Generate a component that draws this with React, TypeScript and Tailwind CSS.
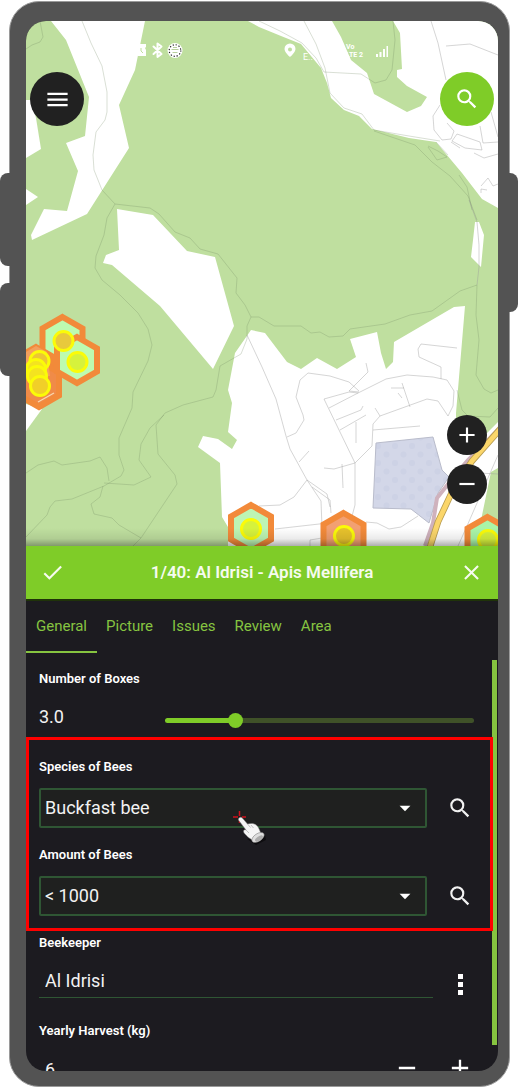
import { useState } from "react";
import type { ReactNode } from "react";
import { MdAdd, MdArrowDropDown, MdCheck, MdClose, MdMenu, MdRemove, MdSearch } from "react-icons/md";

const hexPoints = (x: number, y: number) =>
  [
    [x, y - 23],
    [x + 20, y - 11.5],
    [x + 20, y + 11.5],
    [x, y + 23],
    [x - 20, y + 11.5],
    [x - 20, y - 11.5],
  ]
    .map((p) => p.join(","))
    .join(" ");

function Hive({ x, y, fill }: { x: number; y: number; fill: string }) {
  return <polygon points={hexPoints(x, y)} fill={fill} stroke="#f28a3a" strokeWidth="6" />;
}

function Ring({ x, y, fill = "#d6f23c" }: { x: number; y: number; fill?: string }) {
  return <circle cx={x} cy={y} r="9.5" fill={fill} stroke="#fbfb08" strokeWidth="3" />;
}

function MapView() {
  return (
    <svg
      aria-label="Map"
      viewBox="26 21 472 525"
      preserveAspectRatio="xMidYMid slice"
      className="block h-full w-full bg-[#bfdf9f]"
    >
      <defs>
        <linearGradient id="shade" x1="0" y1="0" x2="0" y2="1">
          <stop offset="0" stopColor="#000" stopOpacity="0" />
          <stop offset="0.6" stopColor="#000" stopOpacity="0.08" />
          <stop offset="1" stopColor="#000" stopOpacity="0.32" />
        </linearGradient>
        <pattern id="dots" width="17" height="17" patternUnits="userSpaceOnUse">
          <rect width="17" height="17" fill="#d3d7e8" />
          <circle cx="4" cy="4" r="3" fill="#cdd2e5" />
          <circle cx="12.5" cy="12.5" r="3" fill="#cdd2e5" />
        </pattern>
      </defs>

      <g fill="#fff">
        <path d="M51 21 66 40 89 97 85 136 66 143 78 171 67 211 44 209 31 235 32 240 87 214 129 148 119 105 135 70 145 21Z" />
        <path d="M26 100h5l5 18 5 31-15 9Z" />
        <path d="M26 189l12 8-12 8Z" />
        <path d="M117 209 153 215 187 251 215 257 234 326 213 369 160 306 112 265 103 263 106 255 119 250Z" />
        <path d="M248 21 259 27 281 36 301 44 321 68 327 83 331 98 344 110 359 116 372 129 409 138 436 142 462 173 482 199 498 208V21Z" />
        <path d="M475 222h4l5 13-3 32-10-10 2-17Z" />
        <path d="M251 330 265 333 287 362 301 369 317 358 337 369 356 357 350 339 377 332 381 353 386 369 393 362 394 342 454 307 465 306 456 413V440L487 433 498 422V468L491 472 480 525 478 546H228V527L222 517 220 463 198 447 203 436 218 439 232 449 237 440 228 432 232 403 228 390 235 353Z" />
        <path d="M26 404 42 409 26 431Z" />
      </g>
      <path
        d="M332 21 341 37 351 60 367 73 374 94 407 112 421 106 427 97 407 86 397 77V70L402 69 400 33 393 21Z"
        fill="#bfdf9f"
      />

      <path
        d="M376 443 433 437 442 470 449 477 438 493 429 523 411 509 373 508Z"
        fill="url(#dots)"
        stroke="#b9bccb"
        strokeWidth="1"
      />

      <g fill="none" stroke="#6f8560" strokeOpacity="0.38" strokeWidth="0.7">
        <path d="M40 21 43 37 40 42 32 45 26 49" />
        <path d="M82 21 91 43 102 66 107 92V112L105 120 96 132 93 155 94 170 102 190 115 204 150 208 159 214 175 232 190 238 200 249 218 254 237 278 236 293 245 305 251 317 259 317 274 326 301 326 311 333 320 332 329 337 343 336 350 329 385 324 410 315 432 311 460 291 477 285" />
        <path d="M115 204 107 218 104 235 96 256 95 268 102 280 120 295 138 313 148 329 152 345 148 361 133 392 132 408 119 438 119 455 124 470 121 476 104 486 72 499 55 501 50 507 47 515 26 537" />
        <path d="M251 317 247 326V339L241 354 220 366 216 390 213 397 183 405 165 413 156 425 158 454 175 475 177 484 141 538 133 546" />
        <path d="M164 415 150 428 141 444 139 460 151 477 134 485 104 483" />
        <path d="M26 473 38 465 54 461 62 465 90 461 100 457 107 468 109 481" />
        <path d="M103 486 100 497 91 504 94 514 112 518 119 525 141 538" />
        <path d="M259 21 280 31 302 43 316 58 324 72 361 74 375 83 386 80 392 70 395 40 393 21" />
        <path d="M304 21 316 44 325 68 330 93 344 108 362 114 374 130 409 136 440 141" />
        <path d="M374 131 415 145 432 162 450 176 468 196 477 220" />
        <path d="M477 285 476 315 479 340 476 375 484 389 491 393 498 390" />
        <path d="M428 147 437 160 447 157 438 151 428 146M436 142 448 155M459 175 467 187 472 210" />
        <path d="M457 390 462 410 468 416 490 417 498 408" />
      </g>

      <g fill="none" stroke="#9b9b9b" strokeOpacity="0.6" strokeWidth="0.7">
        <path d="M431 21 438 43 446 80M446 46 470 44 498 55M440 105 433 116 434 130 442 140 451 139 454 131 447 123" />
        <path d="M480 126 483 143 498 142M491 112 498 137M457 134 480 142 482 150 465 148 452 141ZM451 142 460 148M474 153 484 158 498 154M481 193V189L487 190M481 186 488 178 493 186 498 184" />
        <path d="M469 200 477 222 479 245 479 267 477 285M247 335 262 367 276 399 286 436 290 449 307 480 321 501 322 527M259 506 280 505 294 497 307 480 327 494 330 507" />
        <path d="M359 391 349 382 330 376 308 373 300 380 296 397 303 415 304 420 296 433 287 437M366 363 368 372 349 391 359 392M324 399 349 392 358 393 386 379 407 375 433 377 447 380 454 391 453 406 448 416 438 401 427 399 380 416 373 424 372 446 355 463V505L351 520M324 399 355 463M329 408 358 393M336 420 361 410 363 406M340 430 366 415M324 468 334 469 355 463M342 464 343 488M356 422V443M441 379V367L419 357 418 349 421 344 457 348M402 383 410 407M391 388H404M398 393 402 398M373 430 420 426M375 408 380 416M299 462 309 451" />
        <path d="M275 529 328 523M366 522 377 523 389 529 401 527 418 516M458 546 467 526 498 455M478 473 498 474M310 546V540L322 538M312 487 330 500 331 513" />
      </g>

      <path d="M498 430 468 460 456 474 437 498 433 523 425 546" fill="none" stroke="#cfb2bd" strokeWidth="4" />
      <path d="M502 427 472 461 452 492 438 522 429 550" fill="none" stroke="#b99d51" strokeWidth="6.5" />
      <path d="M502 427 472 461 452 492 438 522 429 550" fill="none" stroke="#fbd66a" strokeWidth="4.8" />

      <Hive x={62.5} y={340} fill="#bdfbb0" />
      <Hive x={36} y={370} fill="#f28a3a" />
      <Hive x={39} y={384} fill="#f08b48" />
      <Hive x={77} y={360} fill="#bdfbb0" />
      <path d="M26 352 36 346 47 352 50 376 26 376Z" fill="#f3a05d" />
      <path d="M38 402 54 393" stroke="#f7d9b0" strokeWidth="1.2" />
      <Ring x={63.5} y={341} fill="#e8c93c" />
      <Ring x={77.5} y={362} />
      <Ring x={39.5} y={361} fill="#edc634" />
      <Ring x={36} y={369} fill="#f4e320" />
      <Ring x={37} y={376} fill="#f4e320" />
      <Ring x={40} y={386} fill="#f1cf28" />
      <Hive x={251} y={528} fill="#bdf5b4" />
      <Ring x={251} y={529} />
      <Hive x={343.5} y={536} fill="#f2a072" />
      <Ring x={344} y={536} fill="#e7c22c" />
      <Hive x={487.5} y={540} fill="#a9f5a8" />
      <Ring x={488} y={540} />

      <rect x="26" y="528" width="472" height="18" fill="url(#shade)" />

      <path
        d="M153.500 46.500 161.500 54 157.500 57V43.500L161.500 46.500 153.500 54"
        fill="none"
        stroke="#fff"
        strokeWidth="2"
        strokeLinecap="round"
        strokeLinejoin="round"
      />
      <path d="M138 44h8v3l-1 1 1 2v6h-8Z" fill="#fff" />
      <path d="M141 48v3l2 2" fill="none" stroke="#bfdf9f" strokeWidth="1" />
      <circle cx="175" cy="50.500" r="7.500" fill="#fff" />
      <circle cx="175" cy="50.500" r="5.800" fill="none" stroke="#222" strokeWidth="1.200" strokeDasharray="1.200 1.830" />
      <path d="M171.500 49.500h7M172.500 52.500h5M173 47.500h4" stroke="#b8cf9d" strokeWidth="1" />
      <path
        fillRule="evenodd"
        d="M290 43.500a5.500 5.500 0 0 0-5.500 5.500c0 3.500 5.500 8 5.500 8s5.500-4.500 5.500-8a5.500 5.500 0 0 0-5.500-5.500Zm0 4a2 2 0 1 1 0 4 2 2 0 0 1 0-4Z"
        fill="#fff"
      />
      <g fill="#fff" fontFamily="Roboto, sans-serif">
        <text x="303" y="60" fontSize="9">E..</text>
        <text x="346" y="49" fontSize="7" fontWeight="700">Vo</text>
        <text x="346" y="57" fontSize="7" fontWeight="700">LTE 2</text>
      </g>
      <path d="M376 54h2v3h-2ZM379.500 52h2v5h-2ZM383 49h2v8h-2ZM386.500 46h1.500v11h-1.500Z" fill="#fff" />
    </svg>
  );
}

function Field({ id, label, children }: { id: string; label: string; children: ReactNode }) {
  return (
    <div className="h-[88px] shrink-0">
      <label htmlFor={id} className="block text-[13px] leading-5 font-semibold text-white">
        {label}
      </label>
      <div className="mt-[11px] flex h-10 items-center">{children}</div>
    </div>
  );
}

function SelectRow({ id, options, pointer }: { id: string; options: string[]; pointer?: boolean }) {
  return (
    <>
      <div className="relative min-w-0 flex-1">
        <select
          id={id}
          className="block h-10 w-full appearance-none rounded-xs border-2 border-[#2f5634] bg-[#1f201f] pl-1 text-lg text-[#f2f2f2] outline-none"
        >
          {options.map((option) => (
            <option key={option}>{option}</option>
          ))}
        </select>
        <MdArrowDropDown size={26} className="pointer-events-none absolute top-[7px] right-[9px] text-white" />
        {pointer && <PointerHand />}
      </div>
      <button type="button" aria-label="Search" className="ml-[19px] flex h-7 w-7 items-center justify-center text-[#f2f2f2]">
        <MdSearch size={26} />
      </button>
    </>
  );
}

function PointerHand() {
  return (
    <svg viewBox="0 0 36 36" className="pointer-events-none absolute top-[21px] left-[192px] h-9 w-9">
      <path d="M2 8h5M11 8h4M8.500 2v5M8.500 10v4" stroke="#d0101c" strokeWidth="1.500" />
      <path d="M16 30 25 36 35 31 34 26Z" fill="#000" opacity="0.5" />
      <path
        d="M8 9c1.500-1.500 3-.5 4 .8l4.500 5.200c3.500-1 6.500-.8 9 1.200 2.200 1.800 3 4.800 4.500 8.300l-9 6.500c-2-1.500-4.500-3-6-5-2-1.500-2.800-3-2.300-4.500.5-1 1.500-1 2.300-.5L7.800 11.500C7.200 10.500 7.200 9.800 8 9Z"
        fill="#f5f5f5"
        stroke="#777"
        strokeWidth="0.500"
      />
      <path d="M16.500 15l3 3.500M20 16l2.500 3M15 21l3 3" fill="none" stroke="#bbb" strokeWidth="0.900" />
      <ellipse cx="27" cy="28.500" rx="7" ry="3.800" transform="rotate(-34 27 28.500)" fill="#dedede" stroke="#777" strokeWidth="0.500" />
      <ellipse cx="28" cy="29.500" rx="4.500" ry="2" transform="rotate(-34 28 29.500)" fill="#aaa" />
    </svg>
  );
}

const tabs = ["General", "Picture", "Issues", "Review", "Area"];

export default function App() {
  const [boxes, setBoxes] = useState(3);
  const [tab, setTab] = useState("General");
  const zoomButton = "flex h-10 w-10 items-center justify-center rounded-full bg-[#212121] text-white";

  return (
    <div className="h-screen bg-white pt-px pr-[9px] pb-px pl-[9px] font-[Roboto,sans-serif]">
      <div className="relative flex h-full flex-col rounded-[30px] border border-[#9a9a9a] bg-[#535353] pt-[19px] pr-[11px] pb-[15px] pl-4">
        <span className="absolute top-[171px] -left-[10px] h-[93px] w-[10px] rounded-l-lg bg-[#535353]" />
        <span className="absolute top-[281px] -left-[10px] h-[93px] w-[10px] rounded-l-lg bg-[#535353]" />
        <span className="absolute top-[171px] -right-[9px] h-[139px] w-[10px] rounded-r-lg bg-[#535353]" />

        <main className="flex min-h-0 flex-1 flex-col overflow-hidden rounded-[20px] bg-[#1c1b20]">
          <section className="relative h-[525px] shrink-0">
            <MapView />
            <div className="absolute inset-x-1 top-[51px] flex justify-between">
              <button type="button" aria-label="Menu" className="flex h-[54px] w-[54px] items-center justify-center rounded-full bg-[#212121] text-white">
                <MdMenu size={27} />
              </button>
              <button type="button" aria-label="Search map" className="flex h-[54px] w-[54px] items-center justify-center rounded-full bg-[#7fcc28] text-white">
                <MdSearch size={26} />
              </button>
            </div>
            <div className="absolute right-[11px] bottom-[42px] flex flex-col gap-[9px]">
              <button type="button" aria-label="Zoom in" className={zoomButton}>
                <MdAdd size={26} />
              </button>
              <button type="button" aria-label="Zoom out" className={zoomButton}>
                <MdRemove size={26} />
              </button>
            </div>
          </section>

          <header className="flex h-[53px] shrink-0 items-center justify-between bg-[#7fcc28] px-[14px] text-[#f6fbef]">
            <button type="button" aria-label="Confirm">
              <MdCheck size={25} />
            </button>
            <h1 className="text-[17px] font-semibold">1/40: Al Idrisi - Apis Mellifera</h1>
            <button type="button" aria-label="Close">
              <MdClose size={25} />
            </button>
          </header>

          <nav className="flex h-[54px] shrink-0 border-t-2 border-[#1f3309] pl-px">
            {tabs.map((name) => (
              <button
                key={name}
                type="button"
                onClick={() => setTab(name)}
                className={`-ml-px border-b-2 px-[10px] text-[15px] text-[#86c440] ${tab === name ? "border-[#86c440]" : "border-transparent"}`}
              >
                {name}
              </button>
            ))}
          </nav>

          <form className="relative flex min-h-0 flex-1 flex-col overflow-hidden pt-4 pr-6 pl-[13px]">
            <span className="absolute top-[7px] right-px bottom-[26px] w-[5px] bg-[#86c440]" />
            <Field id="boxes" label="Number of Boxes">
              <output htmlFor="boxes" className="w-[126px] pb-1.5 text-lg text-[#f2f2f2]">
                {boxes.toFixed(1)}
              </output>
              <input
                id="boxes"
                type="range"
                min={0}
                max={14}
                value={boxes}
                onChange={(e) => setBoxes(Number(e.target.value))}
                className="h-[5px] min-w-0 flex-1 appearance-none rounded-full [&::-webkit-slider-thumb]:h-[15px] [&::-webkit-slider-thumb]:w-[15px] [&::-webkit-slider-thumb]:appearance-none [&::-webkit-slider-thumb]:rounded-full [&::-webkit-slider-thumb]:bg-[#7fcc28]"
                style={{
                  background: `linear-gradient(to right, #7fcc28 ${(boxes / 14) * 100}%, #3f5128 ${(boxes / 14) * 100}%)`,
                }}
              />
            </Field>

            <div className="relative shrink-0">
              <div className="pointer-events-none absolute -top-[20px] -right-[19px] bottom-[2px] -left-[13px] border-3 border-[#fe0000]" />
              <Field id="species" label="Species of Bees">
                <SelectRow id="species" options={["Buckfast bee", "Apis Mellifera"]} pointer />
              </Field>
              <Field id="amount" label="Amount of Bees">
                <SelectRow id="amount" options={["< 1000", "> 1000"]} />
              </Field>
            </div>

            <Field id="keeper" label="Beekeeper">
              <input
                id="keeper"
                type="text"
                defaultValue="Al Idrisi"
                className="mb-1.5 h-[34px] min-w-0 flex-1 border-b border-[#2f5634] bg-transparent pl-1.5 text-lg text-[#f2f2f2] outline-none"
              />
              <button type="button" aria-label="More" className="ml-[13px] flex h-7 w-7 items-center justify-center text-white">
                <svg viewBox="0 0 5 21" className="h-[21px] w-[5px]" fill="currentColor">
                  <path d="M0 0h5v5H0ZM0 8h5v5H0ZM0 16h5v5H0Z" />
                </svg>
              </button>
            </Field>

            <Field id="harvest" label="Yearly Harvest (kg)">
              <input
                id="harvest"
                type="text"
                defaultValue="6"
                className="mb-1.5 h-[34px] min-w-0 flex-1 bg-transparent pl-1.5 text-lg text-[#f2f2f2] outline-none"
              />
              <div className="mb-2 flex gap-[25px] text-white">
                <button type="button" aria-label="Less">
                  <MdRemove size={28} />
                </button>
                <button type="button" aria-label="More harvest">
                  <MdAdd size={28} />
                </button>
              </div>
            </Field>
          </form>
        </main>
      </div>
    </div>
  );
}
